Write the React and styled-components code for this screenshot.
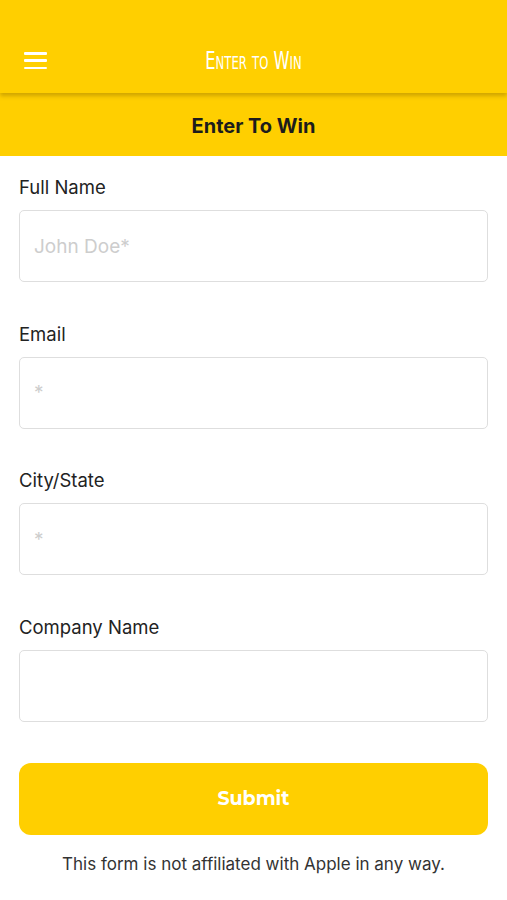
import React from "react";
import styled, { createGlobalStyle } from "styled-components";

const Global = createGlobalStyle`
  html, body { margin: 0; padding: 0; background: #fff; }
  body { font-family: Inter, "Noto Sans", "Liberation Sans", sans-serif; }
  * { box-sizing: border-box; }
`;

const YELLOW = "#ffcf00";

const Page = styled.div`
  width: 507px;
  min-height: 900px;
  background: #fff;
  display: flex;
  flex-direction: column;
`;

const TopBar = styled.header`
  height: 93px;
  background: ${YELLOW};
  display: flex;
  align-items: flex-end;
  padding: 0 0 22px 24px;
  position: relative;
  z-index: 2;
  box-shadow: 0 3px 4px rgba(120, 90, 0, 0.35);
`;

const MenuButton = styled.button`
  border: 0;
  background: transparent;
  padding: 0;
  width: 23px;
  height: 17px;
  display: flex;
  flex-direction: column;
  justify-content: space-between;
  margin-bottom: 2px;
`;

const MenuLine = styled.span`
  display: block;
  height: 2.5px;
  width: 23px;
  border-radius: 1px;
  background: #fff;
`;

const BrandTitle = styled.h1`
  position: absolute;
  left: 0;
  right: 0;
  bottom: 18px;
  margin: 0;
  text-align: center;
  color: #fff;
  font-family: "DejaVu Sans Condensed", "Liberation Sans Narrow", sans-serif;
  font-weight: 400;
  font-size: 25px;
  line-height: 28px;
  font-variant: small-caps;
  transform: scaleX(0.72);
  pointer-events: none;
`;

const SubHeader = styled.div`
  height: 63px;
  background: ${YELLOW};
  display: flex;
  align-items: center;
  justify-content: center;
  font-family: Inter, "Liberation Sans", sans-serif;
  font-weight: 700;
  font-size: 20px;
  color: #1c1c1c;
  padding-top: 3px;
`;

const Form = styled.form`
  display: flex;
  flex-direction: column;
  padding: 20px 19px 0 19px;
`;

const Field = styled.div`
  display: flex;
  flex-direction: column;
  gap: 12px;
  margin-bottom: 40.7px;
`;

const Label = styled.label`
  font-size: 18.5px;
  color: #222;
  line-height: 22px;
`;

const Input = styled.input`
  height: 72px;
  width: 100%;
  border: 1.5px solid #dedede;
  border-radius: 5px;
  padding: 0 14px;
  font-family: inherit;
  font-size: 19px;
  color: #222;
  background: #fff;
  outline: none;
  &::placeholder { color: #cdcdcd; }
`;

const SubmitButton = styled.button`
  height: 72px;
  width: 100%;
  border: 0;
  border-radius: 12px;
  background: ${YELLOW};
  color: #fff;
  font-family: "Montserrat", "Open Sans", "Noto Sans", sans-serif;
  font-weight: 700;
  font-size: 19px;
`;

const Disclaimer = styled.p`
  margin: 18px 0 0;
  text-align: center;
  font-size: 17px;
  color: #333;
  line-height: 22px;
`;

const fields = [
  { label: "Full Name", placeholder: "John Doe*" },
  { label: "Email", placeholder: "*" },
  { label: "City/State", placeholder: "*" },
  { label: "Company Name", placeholder: "" },
];

export default function App() {
  return (
    <Page>
      <Global />
      <TopBar>
        <MenuButton aria-label="menu">
          <MenuLine />
          <MenuLine />
          <MenuLine />
        </MenuButton>
        <BrandTitle>Enter to Win</BrandTitle>
      </TopBar>
      <SubHeader>Enter To Win</SubHeader>
      <Form onSubmit={(e) => e.preventDefault()}>
        {fields.map((f) => (
          <Field key={f.label}>
            <Label>{f.label}</Label>
            <Input placeholder={f.placeholder} />
          </Field>
        ))}
        <SubmitButton type="submit">Submit</SubmitButton>
        <Disclaimer>This form is not affiliated with Apple in any way.</Disclaimer>
      </Form>
    </Page>
  );
}
